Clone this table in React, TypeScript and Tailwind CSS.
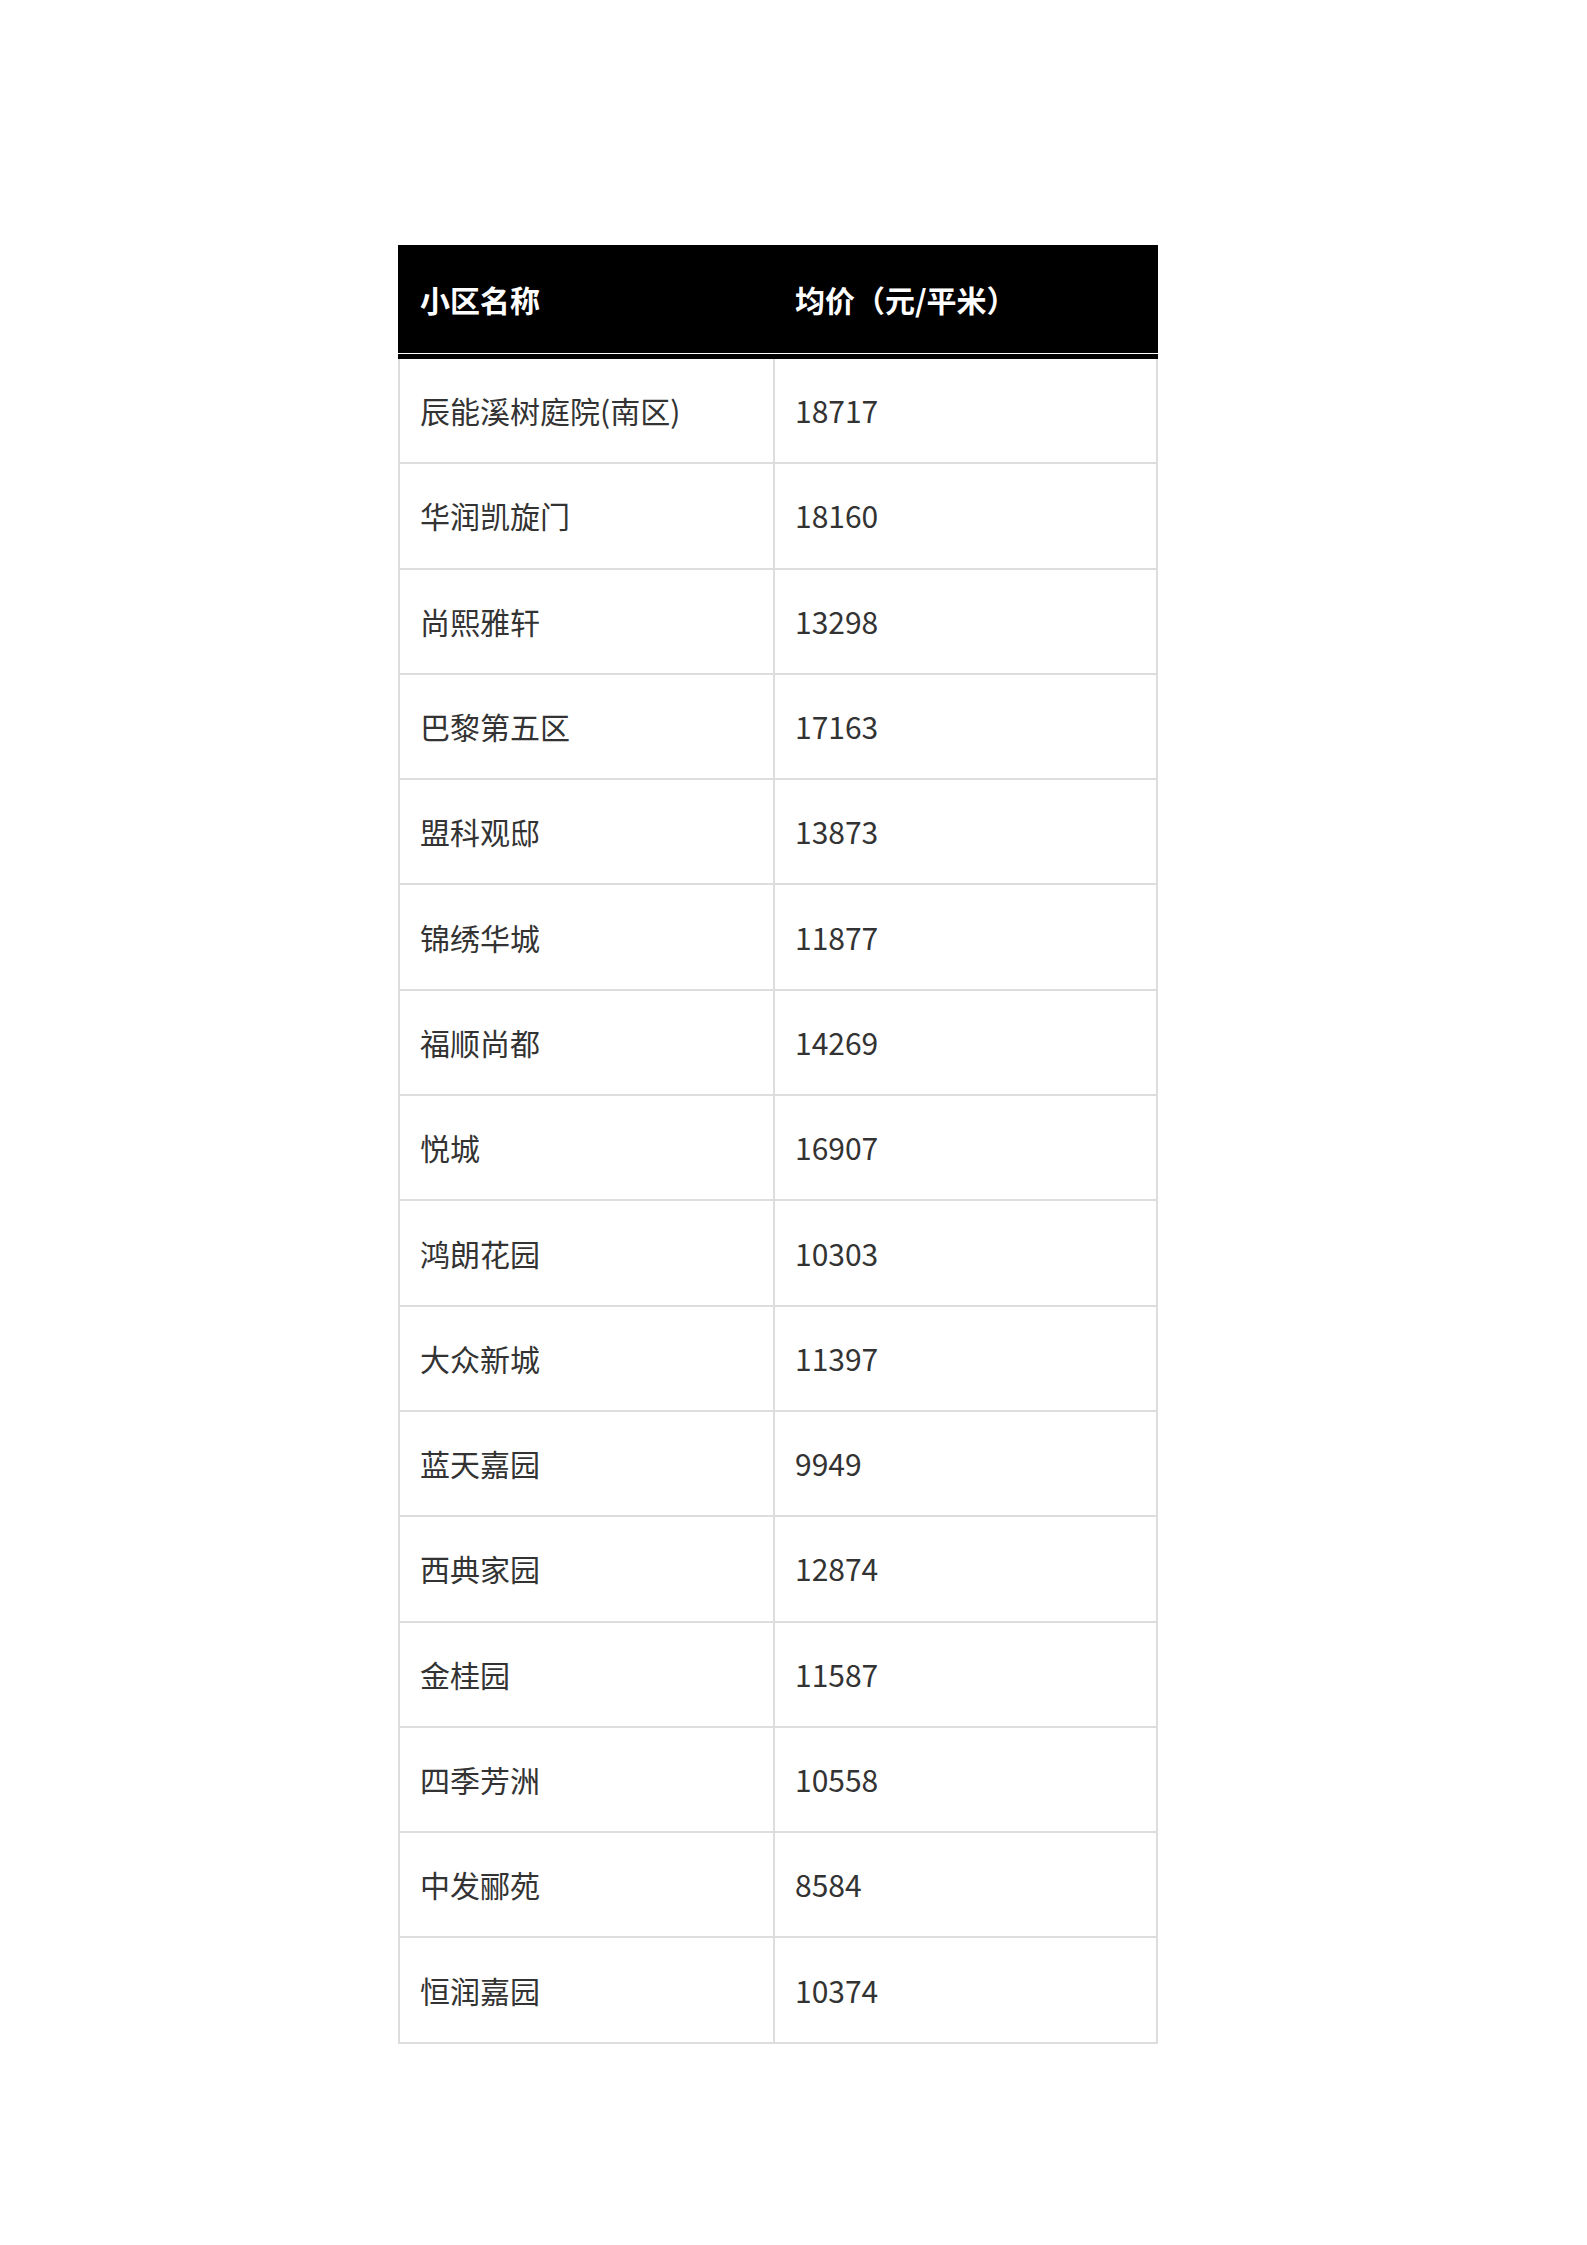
import React from "react";

const rows: [string, string][] = [
  ["辰能溪树庭院(南区)", "18717"],
  ["华润凯旋门", "18160"],
  ["尚熙雅轩", "13298"],
  ["巴黎第五区", "17163"],
  ["盟科观邸", "13873"],
  ["锦绣华城", "11877"],
  ["福顺尚都", "14269"],
  ["悦城", "16907"],
  ["鸿朗花园", "10303"],
  ["大众新城", "11397"],
  ["蓝天嘉园", "9949"],
  ["西典家园", "12874"],
  ["金桂园", "11587"],
  ["四季芳洲", "10558"],
  ["中发郦苑", "8584"],
  ["恒润嘉园", "10374"],
];

export default function App() {
  return (
    <div
      className="min-h-[2245px] bg-white pt-[245px] pl-[398px]"
      style={{ fontFamily: '"Noto Sans CJK SC", "Noto Sans", sans-serif' }}
    >
      <div className="w-[760px]">
        {/* header */}
        <div className="bg-black">
          <div className="flex h-[108px] text-white text-[30px] font-bold">
            <div className="w-[377px] flex items-center pl-[22px]">小区名称</div>
            <div className="flex-1 flex items-center pl-[20px]">均价（元/平米）</div>
          </div>
          <div className="h-px bg-white" />
          <div className="h-[5px]" />
        </div>

        {/* body */}
        <div className="border-x-2 border-[#dddddd] text-[30px] text-[#333333]">
          {rows.map(([name, price]) => (
            <div key={name} className="flex h-[105.3px] border-b-2 border-[#dddddd]">
              <div className="w-[375px] flex items-center pl-[20px] border-r-2 border-[#dddddd]">
                {name}
              </div>
              <div className="flex-1 flex items-center pl-[20px]">{price}</div>
            </div>
          ))}
        </div>
      </div>
    </div>
  );
}
